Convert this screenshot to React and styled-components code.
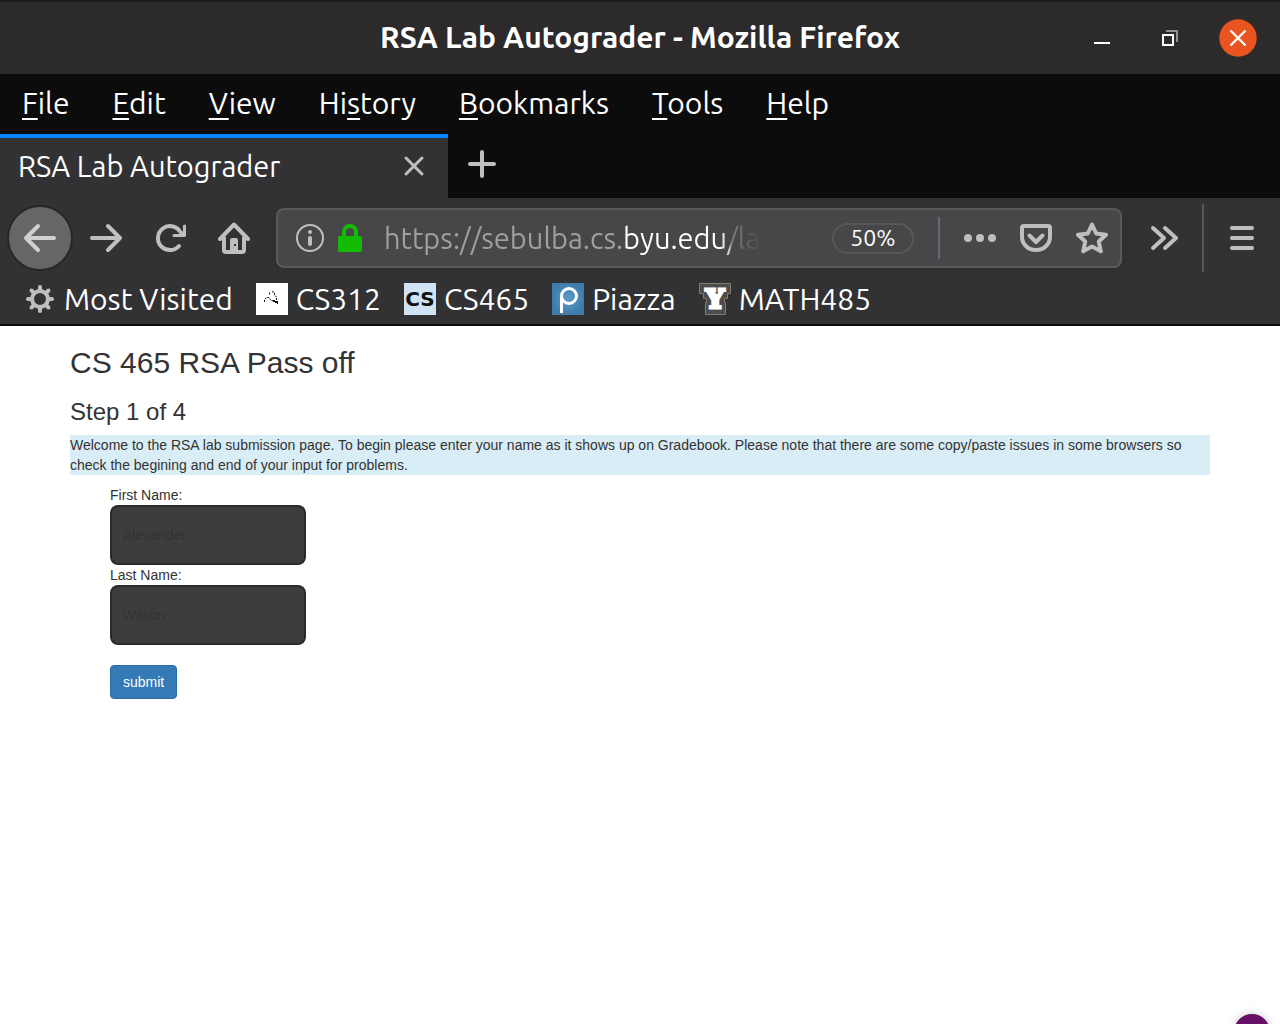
import React from "react";
import styled, { createGlobalStyle, css } from "styled-components";

const UI_FONT = '"Ubuntu", "Noto Sans", sans-serif';

const GlobalStyle = createGlobalStyle`
  *, *::before, *::after { box-sizing: border-box; }
  body {
    margin: 0;
    background: #fff;
    color: #333;
    font: 14px/20px "Liberation Sans", Arial, sans-serif;
  }
  button, input { font: inherit; margin: 0; }
  svg { display: block; flex: none; }
`;

const plainButton = css`
  display: flex;
  align-items: center;
  justify-content: center;
  padding: 0;
  border: 0;
  background: none;
  color: inherit;
  cursor: pointer;
`;

const Chrome = styled.header`
  background: #323234;
  color: #fff;
  font-family: ${UI_FONT};
  font-size: 29px;
  line-height: 40px;
  border-bottom: 2px solid #0c0c0d;
`;

const TitleBar = styled.div`
  display: grid;
  grid-template-columns: 1fr auto 1fr;
  align-items: center;
  height: 74px;
  padding: 0 23px;
  border-top: 2px solid #1f1d1e;
  background: #2c2a2b;
`;

const WindowTitle = styled.div`
  grid-column: 2;
  padding-bottom: 2px;
  font-size: 30px;
  font-weight: 700;
`;

const WindowControls = styled.div`
  display: flex;
  justify-content: flex-end;
  gap: 30px;
`;

const WindowButton = styled.button`
  ${plainButton}
  width: 38px;
  height: 38px;
`;

const MenuBar = styled.nav`
  display: flex;
  gap: 43px;
  height: 60px;
  padding: 0 22px 2px;
  background: #0c0c0c;
  font-size: 30px;
`;

const MenuItem = styled.button`
  ${plainButton}
  display: block;
  u {
    text-decoration-thickness: 2px;
    text-underline-offset: 4px;
    text-decoration-skip-ink: none;
  }
`;

const TabStrip = styled.div`
  display: flex;
  height: 64px;
  background: #0c0c0c;
`;

const Tab = styled.div`
  display: flex;
  align-items: center;
  justify-content: space-between;
  width: 448px;
  padding: 0 20px 4px 18px;
  border-top: 4px solid #0a84ff;
  background: #323234;
`;

const IconButton = styled.button`
  ${plainButton}
  width: ${(p) => p.$width || 64}px;
  height: ${(p) => p.$height || 64}px;
  color: #bfbfc0;
`;

const BackButton = styled(IconButton)`
  width: 66px;
  height: 66px;
  margin-right: 1px;
  border: 2px solid #262627;
  border-radius: 50%;
  background: #666667;
  color: #d0d0d0;
`;

const Toolbar = styled.div`
  display: flex;
  align-items: center;
  height: 80px;
  padding: 0 6px 0 7px;
`;

const AddressBar = styled.div`
  display: flex;
  flex: 1;
  align-items: center;
  min-width: 0;
  height: 60px;
  margin: 0 10px;
  padding: 0 12px 0 16px;
  border: 2px solid #5a5a5c;
  border-radius: 8px;
  background: #474749;
  box-shadow: 0 2px 8px rgba(0, 0, 0, 0.1);
  color: #b1b1b3;
`;

const AddressInput = styled.input`
  flex: 1;
  min-width: 0;
  height: 44px;
  margin: 0 68px 0 18px;
  padding: 0;
  border: 0;
  outline: 0;
  color: transparent;
  background: linear-gradient(
    to right,
    #a0a0a2 241px,
    #fff 241px,
    #fff 332px,
    #c8c8c9 346px,
    #7e7e80 347px,
    #474749 378px
  );
  background-clip: text;
  -webkit-background-clip: text;
`;

const ZoomButton = styled.button`
  ${plainButton}
  width: 82px;
  height: 31px;
  border: 2px solid #57575a;
  border-radius: 16px;
  color: #fff;
  font-size: 23px;
`;

const Divider = styled.div`
  width: 2px;
  height: ${(p) => p.$height}px;
  margin: ${(p) => p.$margin};
  background: ${(p) => p.$color};
`;

const Actions = styled.div`
  display: flex;
  gap: ${(p) => p.$gap}px;
`;

const Bookmarks = styled.nav`
  display: flex;
  gap: 23px;
  height: 46px;
  padding: 0 24px;
  font-size: 30px;
`;

const Bookmark = styled.a`
  display: flex;
  align-items: center;
  gap: 8px;
  height: 42px;
  color: #fff;
  text-decoration: none;
  white-space: nowrap;
`;

const Favicon = styled.span`
  display: flex;
  align-items: center;
  justify-content: center;
  width: 32px;
  height: 32px;
  background: #d0e3f5;
  color: #111;
  font: 700 20px/32px "DejaVu Sans", sans-serif;
`;

const Page = styled.main`
  max-width: 1140px;
  margin: 0 auto;
`;

const Title = styled.h1`
  margin: 20px 0 10px;
  font-size: 30px;
  font-weight: 400;
  line-height: 33px;
`;

const Step = styled.h2`
  margin: 20px 0 10px;
  font-size: 24px;
  font-weight: 400;
  line-height: 26px;
`;

const Notice = styled.p`
  margin: 0 0 10px;
  background: #d9edf7;
`;

const Form = styled.form`
  display: flex;
  flex-direction: column;
  align-items: flex-start;
  padding-left: 40px;
`;

const NameInput = styled.input`
  width: 196px;
  height: 60px;
  padding: 0 11px;
  border: 2px solid #2a2a2a;
  border-radius: 8px;
  background: #3d3d3d;
  color: #333;
`;

const Submit = styled.button`
  height: 34px;
  margin-top: 20px;
  padding: 0 12px;
  border: 1px solid #2e6da4;
  border-radius: 4px;
  background: #337ab7;
  color: #fff;
  cursor: pointer;
`;

const FloatingButton = styled.button`
  position: fixed;
  right: 10px;
  bottom: -26px;
  width: 36px;
  height: 36px;
  padding: 0;
  border: 0;
  border-radius: 50%;
  background: #660f66;
  box-shadow: 0 0 10px rgba(0, 0, 0, 0.2);
`;

const Glyph = ({ size = 32, children, sw = 4 }) => (
  <svg width={size} height={size} viewBox={`0 0 ${size} ${size}`} fill="none" stroke="currentColor" strokeWidth={sw} strokeLinecap="round" strokeLinejoin="round" aria-hidden="true">
    {children}
  </svg>
);

const MENUS = [
  ["", "F", "ile"],
  ["", "E", "dit"],
  ["", "V", "iew"],
  ["Hi", "s", "tory"],
  ["", "B", "ookmarks"],
  ["", "T", "ools"],
  ["", "H", "elp"],
];

const GearIcon = () => (
  <svg width="32" height="32" viewBox="0 0 32 32" fill="none" stroke="#bfbfc0" strokeWidth="4" strokeLinecap="round" aria-hidden="true">
    <circle cx="16" cy="16" r="8" />
    {[0, 45, 90, 135, 180, 225, 270, 315].map((a) => (
      <path key={a} d="M16 7V4" transform={`rotate(${a} 16 16)`} />
    ))}
  </svg>
);

const SketchIcon = () => (
  <svg width="32" height="32" viewBox="0 0 32 32" aria-hidden="true">
    <path fill="#fff" d="M0 0h32v32H0z" />
    <path fill="none" stroke="#111" strokeWidth="1" strokeDasharray="2 1" d="M8.500 19V16.500L11 14.500H13L15 17.500L18 18M13.500 9.500V12M16 8.500L18.500 9.500V12L20.500 14V17.500" />
    <path fill="#111" d="M17 17h2v1h3v3h-1v-1h-2v-1h-2z" />
  </svg>
);

const PiazzaIcon = () => (
  <svg width="32" height="32" viewBox="0 0 32 32" aria-hidden="true">
    <defs>
      <radialGradient id="piazza">
        <stop offset="0" stopColor="#5b9bc9" />
        <stop offset="1" stopColor="#3f7cac" />
      </radialGradient>
    </defs>
    <path fill="url(#piazza)" d="M0 0h32v32H0z" />
    <circle cx="17" cy="13" r="7.500" fill="none" stroke="#fff" strokeWidth="3" />
    <path stroke="#fff" strokeWidth="3" d="M9.500 13v17" />
  </svg>
);

const YIcon = () => (
  <svg width="32" height="32" viewBox="0 0 32 32" aria-hidden="true">
    <path fill="#4a4d4e" stroke="#8a7a68" strokeWidth="1" d="M.5.5h31v10h-3v5h-3v4h1v12h-20v-12h1v-4h-3v-5h-4z" />
    <text x="16" y="25" textAnchor="middle" fontFamily="DejaVu Serif, serif" fontWeight="700" fontSize="26" fill="#fff" stroke="#fff" strokeWidth="3">Y</text>
  </svg>
);

const BOOKMARKS = [
  ["Most Visited", <GearIcon />],
  ["CS312", <SketchIcon />],
  ["CS465", <Favicon>CS</Favicon>],
  ["Piazza", <PiazzaIcon />],
  ["MATH485", <YIcon />],
];

export default function App() {
  return (
    <>
      <GlobalStyle />
      <Chrome>
        <TitleBar>
          <WindowTitle>RSA Lab Autograder - Mozilla Firefox</WindowTitle>
          <WindowControls>
            <WindowButton aria-label="Minimize">
              <svg width="38" height="38" viewBox="0 0 38 38"><path fill="#fff" d="M11 23h16v2H11z" /></svg>
            </WindowButton>
            <WindowButton aria-label="Restore">
              <svg width="38" height="38" viewBox="0 0 38 38" fill="none" strokeWidth="2">
                <path stroke="#929192" d="M15 12h11v11" />
                <path stroke="#fff" d="M12 16h10v10H12z" />
              </svg>
            </WindowButton>
            <WindowButton aria-label="Close">
              <svg width="38" height="38" viewBox="0 0 38 38">
                <circle cx="19" cy="19" r="18.700" fill="#e95420" />
                <path stroke="#fff" strokeWidth="2.400" d="M11.500 11.500l15 15m0-15l-15 15" />
              </svg>
            </WindowButton>
          </WindowControls>
        </TitleBar>
        <MenuBar>
          {MENUS.map(([before, key, after]) => (
            <MenuItem key={before + key}>{before}<u>{key}</u>{after}</MenuItem>
          ))}
        </MenuBar>
        <TabStrip>
          <Tab>
            RSA Lab Autograder
            <IconButton $width={28} $height={28} aria-label="Close tab">
              <Glyph size={28} sw={3}><path d="M6 6l16 16M22 6L6 22" /></Glyph>
            </IconButton>
          </Tab>
          <IconButton $width={68} $height={60} aria-label="New tab">
            <Glyph><path d="M16 4v24M4 16h24" /></Glyph>
          </IconButton>
        </TabStrip>
        <Toolbar>
          <BackButton aria-label="Back">
            <Glyph size={40}><path d="M34 20H6M18 8L6 20l12 12" /></Glyph>
          </BackButton>
          <IconButton aria-label="Forward">
            <Glyph><path d="M2 16h28M18 4l12 12-12 12" /></Glyph>
          </IconButton>
          <IconButton aria-label="Reload">
            <Glyph>
              <path d="M25 24A12 12 0 1 1 26 9.500" />
              <path strokeWidth="3" d="M30.500 4v9.500H20" />
              <path stroke="none" fill="currentColor" d="M30 8v6h-7z" />
            </Glyph>
          </IconButton>
          <IconButton aria-label="Home">
            <Glyph>
              <path d="M2 17L16 2.500 30 17M6 16v12q0 2 2 2h16q2 0 2-2V16" />
              <path stroke="none" fill="currentColor" fillRule="evenodd" d="M12 28V18q0-2 2-2h4q2 0 2 2v10zM16 22v2h2v-2z" />
            </Glyph>
          </IconButton>
          <AddressBar>
            <Actions $gap={8}>
              <IconButton $width={32} $height={32} aria-label="Site information">
                <Glyph sw={2}>
                  <circle cx="16" cy="16" r="13" />
                  <circle cx="16" cy="10" r="2" fill="currentColor" stroke="none" />
                  <path strokeWidth="4" d="M16 16v6" />
                </Glyph>
              </IconButton>
              <IconButton $width={32} $height={32} aria-label="Secure connection">
                <svg width="32" height="32" viewBox="0 0 32 32" aria-hidden="true">
                  <path fill="none" stroke="#12bc00" strokeWidth="4" d="M10 16V10a6 6 0 0 1 12 0v6" />
                  <rect x="4" y="14" width="24" height="16" rx="2" fill="#12bc00" />
                </svg>
              </IconButton>
            </Actions>
            <AddressInput aria-label="Address" defaultValue="https://sebulba.cs.byu.edu/la" spellCheck={false} />
            <ZoomButton aria-label="Zoom level">50%</ZoomButton>
            <Divider $height={42} $margin="0 24px" $color="#66687a" />
            <Actions $gap={24}>
              <IconButton $width={32} $height={32} aria-label="Page actions">
                <svg width="32" height="32" viewBox="0 0 32 32" fill="currentColor"><circle cx="4" cy="16" r="4" /><circle cx="16" cy="16" r="4" /><circle cx="28" cy="16" r="4" /></svg>
              </IconButton>
              <IconButton $width={32} $height={32} aria-label="Save to Pocket">
                <Glyph><path d="M4 4h24q2 0 2 2v9a14 13 0 0 1-28 0V6q0-2 2-2z" /><path d="M9.500 13.500l6.500 6.500 6.500-6.500" /></Glyph>
              </IconButton>
              <IconButton $width={32} $height={32} aria-label="Bookmark this page">
                <Glyph><path d="M16 2.500l4.200 9 9.800 1.200-7.200 6.800 2 9.800-8.800-4.700-8.800 4.700 2-9.800L2 12.700l9.800-1.200z" /></Glyph>
              </IconButton>
            </Actions>
          </AddressBar>
          <IconButton aria-label="More tools">
            <Glyph><path d="M5 6l11 10L5 26M17 6l11 10-11 10" /></Glyph>
          </IconButton>
          <Divider $height={68} $margin="0 6px" $color="#58585a" />
          <IconButton aria-label="Open menu">
            <Glyph><path d="M6 6h20M6 16h20M6 26h20" /></Glyph>
          </IconButton>
        </Toolbar>
        <Bookmarks>
          {BOOKMARKS.map(([name, icon]) => (
            <Bookmark key={name} href="#">{icon}{name}</Bookmark>
          ))}
        </Bookmarks>
      </Chrome>
      <Page>
        <Title>CS 465 RSA Pass off</Title>
        <Step>Step 1 of 4</Step>
        <Notice>
          Welcome to the RSA lab submission page. To begin please enter your name as it shows up on Gradebook. Please note that there are some copy/paste issues in some browsers so check the begining and end of your input for problems.
        </Notice>
        <Form onSubmit={(e) => e.preventDefault()}>
          <label htmlFor="first">First Name:</label>
          <NameInput id="first" defaultValue="Alexander" />
          <label htmlFor="last">Last Name:</label>
          <NameInput id="last" defaultValue="Wilson" />
          <Submit type="submit">submit</Submit>
        </Form>
      </Page>
      <FloatingButton aria-label="Open helper" />
    </>
  );
}
